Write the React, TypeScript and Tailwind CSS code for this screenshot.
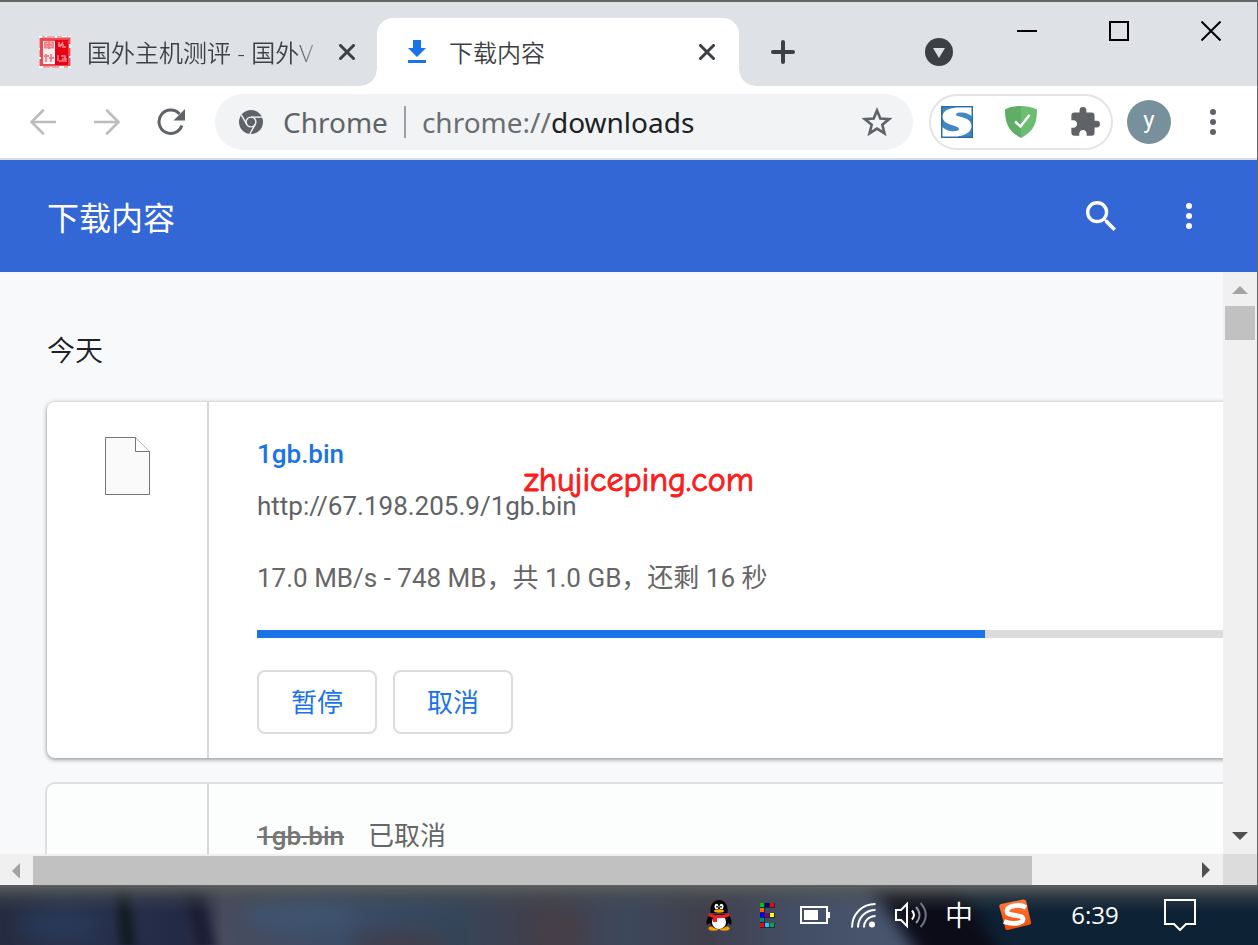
import { useState, type ReactNode } from "react";

const UI_FONT = "font-['Open_Sans','Noto_Sans_CJK_SC',sans-serif]";
const PAGE_FONT = "font-['Roboto','Noto_Sans_CJK_SC',sans-serif]";

function CloseGlyph() {
  return (
    <svg viewBox="0 0 16 16" className="size-4" fill="none" stroke="#3c4043" strokeWidth="3" strokeLinecap="round">
      <path d="M1.5 1.5l13 13M14.5 1.5l-13 13" />
    </svg>
  );
}

function SealIcon() {
  return (
    <svg viewBox="0 0 32 32" className="size-8 shrink-0">
      <rect width="32" height="32" fill="#f4a3a7" />
      <rect x="1" y="2" width="30" height="28" fill="#ea4a52" />
      <rect x="4" y="5" width="12" height="23" fill="#fdeff0" />
      <rect x="16" y="4" width="13" height="25" fill="#e60012" />
      <path d="M6 6.500h8v5H6zM7 9h6M10 5v8M5 20h5M7 18v8M12 18v8M10 22h5" stroke="#f08085" strokeWidth="1.800" fill="none" />
      <path d="M20 6v5M19 9h6M24 6l-3 5M27 11h-4M19 19v6M22 20h4v3h-3M27 22v4M20 25h6" stroke="#f68a90" strokeWidth="1.500" fill="none" />
      <path d="M0 1h3M0 13h1M0 22h2M7 0v1M17 0v2M23 0h5M31 8v4M31 20v2M12 31v1M20 31h5M0 31h4M29 0h3M29 31h3" stroke="#fff" strokeWidth="2" />
    </svg>
  );
}

function ChromeGlyph() {
  return (
    <svg viewBox="-12 -12 24 24" className="size-6 shrink-0">
      <circle r="12" fill="#5f6368" />
      <g fill="none" stroke="#f1f3f4" strokeWidth="1.4">
        <circle r="4.900" />
        <path d="M0 -4.900H11" />
        <path d="M0 -4.900H11" transform="rotate(120)" />
        <path d="M0 -4.900H11" transform="rotate(240)" />
      </g>
    </svg>
  );
}

function PenguinIcon() {
  return (
    <svg viewBox="0 0 26 31" className="h-[31px] w-[26px]">
      <ellipse cx="7.500" cy="28.500" rx="5" ry="2.200" fill="#f5a300" />
      <ellipse cx="18.500" cy="28.500" rx="5" ry="2.200" fill="#f5a300" />
      <path d="M4 14C1 18 0 21 .6 24c.6 1.300 2 .2 3-1.500C4.500 26 8 29 13 29s8.500-3 9.400-6.500c1 1.700 2.400 2.800 3 1.500.6-3-.4-6-3.400-10z" fill="#050505" />
      <path d="M4.500 13C3.500 4 8 0 13 0s9.500 4 8.500 13z" fill="#050505" />
      <ellipse cx="13" cy="22" rx="7" ry="7" fill="#fff" />
      <ellipse cx="10.500" cy="6.500" rx="2" ry="2.700" fill="#fff" />
      <ellipse cx="15.500" cy="6.500" rx="2" ry="2.700" fill="#fff" />
      <circle cx="11" cy="6.800" r=".9" />
      <circle cx="15" cy="6.800" r=".9" />
      <ellipse cx="13" cy="11" rx="5" ry="1.700" fill="#f8a600" />
      <path d="M3 13c5 2.600 15 2.600 20 0l.6 3c-5 3-16 3-21.200 0z" fill="#e8202c" />
      <path d="M7 16.500h4v5.500H7z" fill="#e8202c" />
    </svg>
  );
}

const PIXELS: Array<[number, number, string]> = [
  [0, 0, "#00c800"], [1, 0, "#000090"], [2, 0, "#ff0000"],
  [0, 1, "#ff6600"],
  [0, 2, "#0000ff"], [1, 2, "#800080"], [2, 2, "#ffff00"],
  [0, 3, "#008080"],
  [0, 4, "#ff0000"], [1, 4, "#20c8ff"], [2, 4, "#00a850"],
];

function PixelIcon() {
  return (
    <svg viewBox="0 0 15 25" className="h-[25px] w-[15px]" shapeRendering="crispEdges">
      {PIXELS.map(([x, y, fill]) => (
        <g key={`${x}-${y}`}>
          <rect x={x * 5} y={y * 5} width="5" height="5" fill="#1a2a3c" />
          <rect x={x * 5} y={y * 5} width="4" height="4" fill={fill} />
        </g>
      ))}
    </svg>
  );
}

function BatteryIcon() {
  return (
    <svg viewBox="0 0 30 18" className="h-[18px] w-[30px]">
      <rect x="1" y="1" width="26" height="16" fill="none" stroke="#fff" strokeWidth="2" />
      <rect x="4" y="4" width="14" height="10" fill="#fff" />
      <rect x="28" y="6" width="2" height="6" fill="#fff" />
    </svg>
  );
}

function WifiIcon() {
  return (
    <svg viewBox="0 0 25 25" className="size-[25px]" fill="none" stroke="#fff" strokeWidth="2">
      <path d="M1 24.500C1 11 11 1 24.500 1" />
      <path d="M7 24.500C7 14.500 14.500 7 24.500 7" />
      <path d="M13 24.500C13 18 18 13 24.500 13" />
      <circle cx="21" cy="21.500" r="3" fill="#fff" stroke="none" />
    </svg>
  );
}

function SpeakerIcon() {
  return (
    <svg viewBox="0 0 32 28" className="h-7 w-8" fill="none" stroke="#fff" strokeWidth="2">
      <path d="M1 9h5l6-6v22l-6-6H1z" />
      <path d="M17 9.500c2.600 3 2.600 6 0 9" />
      <path d="M21 6c4.600 5 4.600 11 0 16" stroke="#8d95a0" />
      <path d="M25.500 2c7 7.500 7 16.500 0 24" stroke="#6d7682" />
    </svg>
  );
}

function SogouIcon() {
  return (
    <svg viewBox="0 0 32 32" className="size-8">
      <defs>
        <linearGradient id="sogou" x1="0" y1="0" x2="0" y2="1">
          <stop offset="0" stopColor="#ff7b3c" />
          <stop offset="1" stopColor="#f04a06" />
        </linearGradient>
      </defs>
      <path d="M2 5L24 .5q2.500-.4 3.200 2L32 23q.4 2-1.600 2.700L9 31q-2 .4-2.700-1.600L.3 7.500Q0 5.500 2 5z" fill="url(#sogou)" />
      <path d="M27 8.500C20 4.500 7.500 7 8 12.500 8.500 18 24 15 24 20c0 5-12 5.500-19 2.500" fill="none" stroke="#fff" strokeWidth="4.800" />
    </svg>
  );
}

function TaskbarWallpaper() {
  return (
    <svg viewBox="0 0 1258 60" preserveAspectRatio="none" className="absolute inset-0 size-full" aria-hidden="true">
      <defs>
        <filter id="soft" x="-10%" y="-60%" width="120%" height="220%" colorInterpolationFilters="sRGB">
          <feGaussianBlur stdDeviation="8" />
        </filter>
        <filter id="soft-small" x="-50%" y="-30%" width="200%" height="160%" colorInterpolationFilters="sRGB">
          <feGaussianBlur stdDeviation="4 1" />
        </filter>
        <linearGradient id="wall">
          <stop offset="0" stopColor="#252c40" />
          <stop offset=".05" stopColor="#29344f" />
          <stop offset=".14" stopColor="#232a45" />
          <stop offset=".16" stopColor="#2a2c43" />
          <stop offset=".178" stopColor="#484c5e" />
          <stop offset=".27" stopColor="#3b4d67" />
          <stop offset=".36" stopColor="#35455a" />
          <stop offset=".43" stopColor="#423f4b" />
          <stop offset=".5" stopColor="#3d485c" />
          <stop offset=".56" stopColor="#403f4b" />
          <stop offset=".63" stopColor="#424e65" />
          <stop offset=".72" stopColor="#4a5770" />
        </linearGradient>
        <linearGradient id="edge" x1="0" y1="0" x2="0" y2="1">
          <stop offset="0" stopColor="#5d605f" />
          <stop offset=".25" stopColor="#4a4f52" stopOpacity=".35" />
          <stop offset=".45" stopColor="#4a4f52" stopOpacity="0" />
        </linearGradient>
      </defs>
      <rect width="1258" height="60" fill="url(#wall)" />
      <path d="M116 0h12l8 60h-16z" fill="#121c24" filter="url(#soft-small)" />
      <path d="M182 0h18l14 60h-18z" fill="#1b1f36" filter="url(#soft-small)" />
      <g filter="url(#soft)">
        <ellipse cx="60" cy="40" rx="40" ry="14" fill="#283856" />
        <ellipse cx="300" cy="30" rx="55" ry="16" fill="#3f536e" />
        <ellipse cx="400" cy="58" rx="50" ry="12" fill="#403f4d" />
        <ellipse cx="560" cy="45" rx="25" ry="20" fill="#463f47" />
        <path d="M858 -20L925 80H1400V-20z" fill="#0c0c18" />
        <path d="M945 -20L1010 80H1400V-20z" fill="#0e2235" />
      </g>
      <rect width="1258" height="60" fill="url(#edge)" />
    </svg>
  );
}

function TabStrip() {
  return (
    <div className={`flex h-[84px] shrink-0 bg-[#dee1e6] ${UI_FONT}`}>
      <div role="tablist" className="flex min-w-0 items-end">
        <div className="flex h-[68px] w-[377px] items-center pr-[14px] pl-[39px]">
          <SealIcon />
          <button
            type="button"
            role="tab"
            aria-selected={false}
            className="ml-4 flex-1 bg-linear-to-r from-[#3c4043] from-85% to-transparent to-100% bg-clip-text pt-[2px] text-left text-2xl font-[350] whitespace-nowrap text-transparent"
          >
            国外主机测评 - 国外V
          </button>
          <button type="button" aria-label="关闭标签页" className="flex size-8 items-center justify-center">
            <CloseGlyph />
          </button>
        </div>
        <div className="relative flex h-[68px] w-[362px] items-center rounded-t-2xl bg-white pr-4 pl-7 before:absolute before:bottom-0 before:-left-4 before:size-4 before:bg-[radial-gradient(circle_at_0_0,transparent_15px,white_16px)] after:absolute after:-right-4 after:bottom-0 after:size-4 after:bg-[radial-gradient(circle_at_100%_0,transparent_15px,white_16px)]">
          <svg viewBox="0 0 24 24" className="size-6 shrink-0" fill="#1a73e8">
            <path d="M8 0h8v8h5l-9 9-9-9h5zM3 20h18v3H3z" />
          </svg>
          <button type="button" role="tab" aria-selected={true} className="ml-5 flex-1 pt-[2px] text-left text-2xl font-[350] text-[#3c4043]">
            下载内容
          </button>
          <button type="button" aria-label="关闭标签页" className="flex size-8 items-center justify-center">
            <CloseGlyph />
          </button>
        </div>
        <button type="button" aria-label="新标签页" className="ml-4 flex h-[68px] w-14 items-center justify-center">
          <svg viewBox="0 0 24 24" className="size-6" fill="none" stroke="#3c4043" strokeWidth="4" strokeLinecap="round">
            <path d="M12 2v20M2 12h20" />
          </svg>
        </button>
      </div>
      <div className="ml-auto flex shrink-0">
        <button type="button" aria-label="搜索标签页" className="mr-[14px] flex h-[68px] w-14 items-center justify-center self-end">
          <svg viewBox="0 0 28 28" className="size-7">
            <circle cx="14" cy="14" r="14" fill="#3c4043" />
            <path d="M8 10h12l-6 10z" fill="#dee1e6" />
          </svg>
        </button>
        <WindowButton label="最小化">
          <path d="M0 10h20" />
        </WindowButton>
        <WindowButton label="最大化">
          <path d="M1 1h18v18H1z" />
        </WindowButton>
        <WindowButton label="关闭">
          <path d="M.5 .5l19 19M19.500 .5l-19 19" />
        </WindowButton>
      </div>
    </div>
  );
}

function WindowButton({ label, children }: { label: string; children: ReactNode }) {
  return (
    <button type="button" aria-label={label} className="flex h-[58px] w-23 items-center justify-center">
      <svg viewBox="0 0 20 20" className="size-5" fill="none" stroke="#000" strokeWidth="2">
        {children}
      </svg>
    </button>
  );
}

function Toolbar() {
  const nav = "flex size-16 shrink-0 items-center justify-center";
  return (
    <div className={`flex h-[74px] shrink-0 items-center border-b-2 border-[#dadce0] bg-white pr-4 pl-[11px] ${UI_FONT}`}>
      <button type="button" aria-label="后退" className={nav}>
        <svg viewBox="0 0 26 26" className="size-[26px]" fill="none" stroke="#babcbe" strokeWidth="2.600" strokeLinecap="round">
          <path d="M25 13H2M13 1.500L1.500 13 13 24.500" />
        </svg>
      </button>
      <button type="button" aria-label="前进" className={nav}>
        <svg viewBox="0 0 26 26" className="size-[26px]" fill="none" stroke="#babcbe" strokeWidth="2.600" strokeLinecap="round">
          <path d="M1 13h23M13 1.500L24.500 13 13 24.500" />
        </svg>
      </button>
      <button type="button" aria-label="重新加载" className={nav}>
        <svg viewBox="0 0 28 28" className="size-7">
          <path d="M24.800 17.500A11.700 11.700 0 1 1 22.500 6" fill="none" stroke="#5f6368" strokeWidth="3" />
          <path d="M28 1v11.500H16.500z" fill="#5f6368" />
        </svg>
      </button>
      <div className="ml-3 flex h-14 min-w-0 flex-1 items-center rounded-full bg-[#f1f3f4] pr-5 pl-6 font-['Noto_Sans',sans-serif] text-[28px]">
        <ChromeGlyph />
        <span className="ml-5 text-[#5f6368]">Chrome</span>
        <span className="mx-4 h-8 w-[2px] bg-[#9aa0a6]" />
        <label htmlFor="address" className="text-[#6b6e72]">
          chrome://
        </label>
        <input id="address" type="text" defaultValue="downloads" className="min-w-0 flex-1 bg-transparent text-[#202124] outline-none" />
        <button type="button" aria-label="添加书签" className="flex size-8 items-center justify-center">
          <svg viewBox="0 0 30 30" className="size-[30px]" fill="none" stroke="#5f6368" strokeWidth="2.600">
            <path d="M15 3.500l3.300 8.100 8.700.6-6.700 5.600 2.200 8.500L15 21.600l-7.500 4.700 2.200-8.500L3 12.200l8.700-.6z" />
          </svg>
        </button>
      </div>
      <div className="ml-4 flex h-14 shrink-0 items-center gap-3 rounded-full border-2 border-[#e3e4e6]">
        <button type="button" aria-label="扩展 S" className="flex h-12 w-13 items-center justify-center">
          <svg viewBox="0 0 32 32" className="size-8">
            <rect width="32" height="32" fill="#2a6da8" />
            <rect x="1.500" y="1.500" width="29" height="29" fill="#4088c4" />
            <path d="M30.500 1.500v9C28 6.500 16 5 15 8.500c-.5 3 15.500 1.500 15.500 11.500 0 8-11 10.500-17 10.500H1.500V21c4 5 16 5.500 16.500 2C18.500 19 1.500 20 1.500 10.500 1.500 3.500 11 1.500 18 1.500z" fill="#fff" />
          </svg>
        </button>
        <button type="button" aria-label="广告拦截" className="flex h-12 w-13 items-center justify-center">
          <svg viewBox="0 0 32 32" className="size-8">
            <path d="M16 0C10 0 4.500 1.200 0 3.500 0 16 2.500 25 16 32z" fill="#5fae68" />
            <path d="M16 0c6 0 11.500 1.200 16 3.500C32 16 29.500 25 16 32z" fill="#6cbd72" />
            <path d="M10 15.500l5.500 5L24.500 9" fill="none" stroke="#fff" strokeWidth="2.500" />
          </svg>
        </button>
        <button type="button" aria-label="扩展程序" className="flex h-12 w-13 items-center justify-center">
          <svg viewBox="1 1 22 22" className="size-[30px]" fill="#5f6368">
            <path d="M20.500 11H19V7c0-1.100-.9-2-2-2h-4V3.500a2.500 2.500 0 0 0-5 0V5H4c-1.100 0-1.990.9-1.990 2v3.800H3.500c1.490 0 2.700 1.210 2.700 2.700s-1.210 2.700-2.700 2.700H2V20c0 1.100.9 2 2 2h3.800v-1.500c0-1.490 1.210-2.700 2.700-2.700s2.700 1.210 2.700 2.700V22H17c1.100 0 2-.9 2-2v-4h1.500a2.500 2.500 0 0 0 0-5z" />
          </svg>
        </button>
      </div>
      <button type="button" className="ml-[14px] flex size-11 shrink-0 items-center justify-center rounded-full bg-[#78909c] pb-1 font-['Roboto',sans-serif] text-2xl text-white">
        y
      </button>
      <button type="button" aria-label="自定义及控制" className="ml-[14px] flex size-14 shrink-0 items-center justify-center">
        <MenuDots className="h-[26px] w-[6px] fill-[#5f6368]" />
      </button>
    </div>
  );
}

function MenuDots({ className }: { className: string }) {
  return (
    <svg viewBox="0 0 6 26" className={className}>
      <circle cx="3" cy="3" r="3" />
      <circle cx="3" cy="13" r="3" />
      <circle cx="3" cy="23" r="3" />
    </svg>
  );
}

function PageHeader() {
  return (
    <header className={`flex h-28 shrink-0 items-center bg-[#3367d6] pr-10 pl-[47px] text-white ${PAGE_FONT}`}>
      <h1 className="flex-1 pt-[6px] text-[32px] leading-10">下载内容</h1>
      <button type="button" aria-label="搜索下载内容" className="mr-8 flex size-14 items-center justify-center">
        <svg viewBox="3 3 17.500 17.500" className="size-[30px]" fill="#fff">
          <path d="M15.500 14h-.79l-.28-.27A6.470 6.470 0 0 0 16 9.500 6.500 6.500 0 1 0 9.500 16c1.610 0 3.090-.59 4.230-1.570l.27.28v.79l5 4.990L20.490 19l-4.990-5zm-6 0C7.010 14 5 11.990 5 9.500S7.010 5 9.500 5 14 7.010 14 9.500 11.990 14 9.500 14z" />
        </svg>
      </button>
      <button type="button" aria-label="更多操作" className="flex size-14 items-center justify-center">
        <MenuDots className="h-[26px] w-[6px] fill-white" />
      </button>
    </header>
  );
}

function ActionButton({ children, onClick }: { children: ReactNode; onClick?: () => void }) {
  return (
    <button type="button" onClick={onClick} className="flex h-16 w-[120px] items-center justify-center rounded-lg border-2 border-[#dadce0] pt-[2px] text-[26px] text-[#1a73e8]">
      {children}
    </button>
  );
}

function Downloads() {
  const [paused, setPaused] = useState(false);
  const percent = 73;
  return (
    <main className={`min-w-0 flex-1 overflow-hidden bg-[#f8f9fa] ${PAGE_FONT}`}>
      <div className="w-full min-w-[1350px] pt-[60px] pr-12 pl-[47px] text-[26px] leading-10">
        <h2 className="mb-[30px] text-[28px] leading-10 font-[350] text-[#202124]">今天</h2>
        <article className="mb-[26px] flex rounded-lg bg-white shadow-[0_2px_4px_rgba(60,64,67,0.4),0_0_4px_rgba(60,64,67,0.25)]">
          <div className="flex w-[162px] shrink-0 justify-center border-r-2 border-[#d8d8d8] pt-[35px]">
            <svg viewBox="0 0 45 58" className="h-[58px] w-[45px]" fill="#fafafa" stroke="#757575">
              <path d="M.5 .5h30l14 14v43H.5z" />
              <path d="M30.500 .5v14h14" fill="#fff" />
            </svg>
          </div>
          <div className="relative flex-1 pt-8 pr-12 pb-6 pl-12">
            <a href="#file" className="block w-fit font-medium text-[#1a73e8]">
              1gb.bin
            </a>
            <a href="#source" className="mt-3 block w-fit text-[#5f6368]">
              http://67.198.205.9/1gb.bin
            </a>
            <p className="mt-8 text-[#666]">17.0 MB/s - 748 MB，共 1.0 GB，还剩 16 秒</p>
            <div role="progressbar" aria-label="下载进度" aria-valuenow={percent} aria-valuemin={0} aria-valuemax={100} className="mt-8 h-2 bg-[#dcdcdc]">
              <div className="h-full bg-[#1a73e8]" style={{ width: `${percent}%` }} />
            </div>
            <div className="mt-8 flex gap-4">
              <ActionButton onClick={() => setPaused(!paused)}>{paused ? "继续" : "暂停"}</ActionButton>
              <ActionButton>取消</ActionButton>
            </div>
            <span className="absolute top-[58px] left-[315px] font-['Comic_Sans_MS','Comic_Neue','Lato',sans-serif] text-[34px] text-[#fb1c1c] [-webkit-text-stroke:1px_#fb1c1c]">
              zhujiceping.com
            </span>
          </div>
        </article>
        <article className="flex h-[356px] rounded-lg bg-[#fcfefd] ring-2 ring-[#dedfe0]">
          <div className="w-[162px] shrink-0 border-r-2 border-[#d8d8d8]" />
          <div className="flex gap-6 pt-8 pl-12 text-[#666]">
            <span className="font-medium text-[#757575] line-through">1gb.bin</span>
            <span>已取消</span>
          </div>
        </article>
      </div>
    </main>
  );
}

function ArrowButton({ label, path, className }: { label: string; path: string; className: string }) {
  return (
    <button type="button" aria-label={label} className={`flex shrink-0 items-center justify-center ${className}`}>
      <svg viewBox="0 0 16 16" className="size-4">
        <path d={path} />
      </svg>
    </button>
  );
}

function Taskbar() {
  const slot = "flex h-full w-12 items-center justify-center";
  return (
    <footer className={`relative h-[60px] shrink-0 overflow-hidden bg-[#0e2235] text-white ${UI_FONT}`}>
      <TaskbarWallpaper />
      <div className="relative flex h-full items-center justify-end pr-[41px]">
        <button type="button" aria-label="QQ" className={slot}><PenguinIcon /></button>
        <button type="button" aria-label="显示设置" className={slot}><PixelIcon /></button>
        <button type="button" aria-label="电池" className={slot}><BatteryIcon /></button>
        <button type="button" aria-label="网络" className={slot}><WifiIcon /></button>
        <button type="button" aria-label="音量" className={slot}><SpeakerIcon /></button>
        <button type="button" className={`${slot} text-[28px] leading-none font-[350]`}>中</button>
        <button type="button" aria-label="输入法" className="flex h-full w-16 items-center justify-center"><SogouIcon /></button>
        <button type="button" className="h-full w-24 text-2xl">6:39</button>
        <button type="button" aria-label="通知" className="flex h-full w-[74px] items-center justify-center">
          <svg viewBox="0 0 32 32" className="size-8" fill="none" stroke="#fff" strokeWidth="2">
            <path d="M1 1h30v24h-9l-6 6-6-6H1z" />
          </svg>
        </button>
      </div>
    </footer>
  );
}

export default function App() {
  return (
    <div className="flex h-screen flex-col overflow-hidden">
      <div className="flex min-h-0 flex-1 flex-col border-t-2 border-r border-[#666]">
        <TabStrip />
        <Toolbar />
        <PageHeader />
        <div className="flex min-h-0 flex-1">
          <Downloads />
          <div className="flex w-[34px] shrink-0 flex-col bg-[#f0f0f0]">
            <ArrowButton label="向上滚动" path="M0 13l8-8 8 8z" className="h-[34px] fill-[#a3a3a3]" />
            <div className="mx-[2px] h-[34px] bg-[#c1c1c1]" />
            <ArrowButton label="向下滚动" path="M0 3h16l-8 8z" className="mt-auto h-[34px] fill-[#505050]" />
          </div>
        </div>
        <div className="flex h-[31px] shrink-0 bg-[#f0f0f0]">
          <ArrowButton label="向左滚动" path="M11 1v16L3 9z" className="w-[33px] fill-[#a3a3a3]" />
          <div className="flex-1 pt-[2px]">
            <div className="h-full w-[86.4%] bg-[#c1c1c1]" />
          </div>
          <ArrowButton label="向右滚动" path="M4 0v16l8-8z" className="w-[34px] fill-[#505050]" />
          <div className="w-[34px] bg-[#dcdcdc]" />
        </div>
      </div>
      <Taskbar />
    </div>
  );
}
